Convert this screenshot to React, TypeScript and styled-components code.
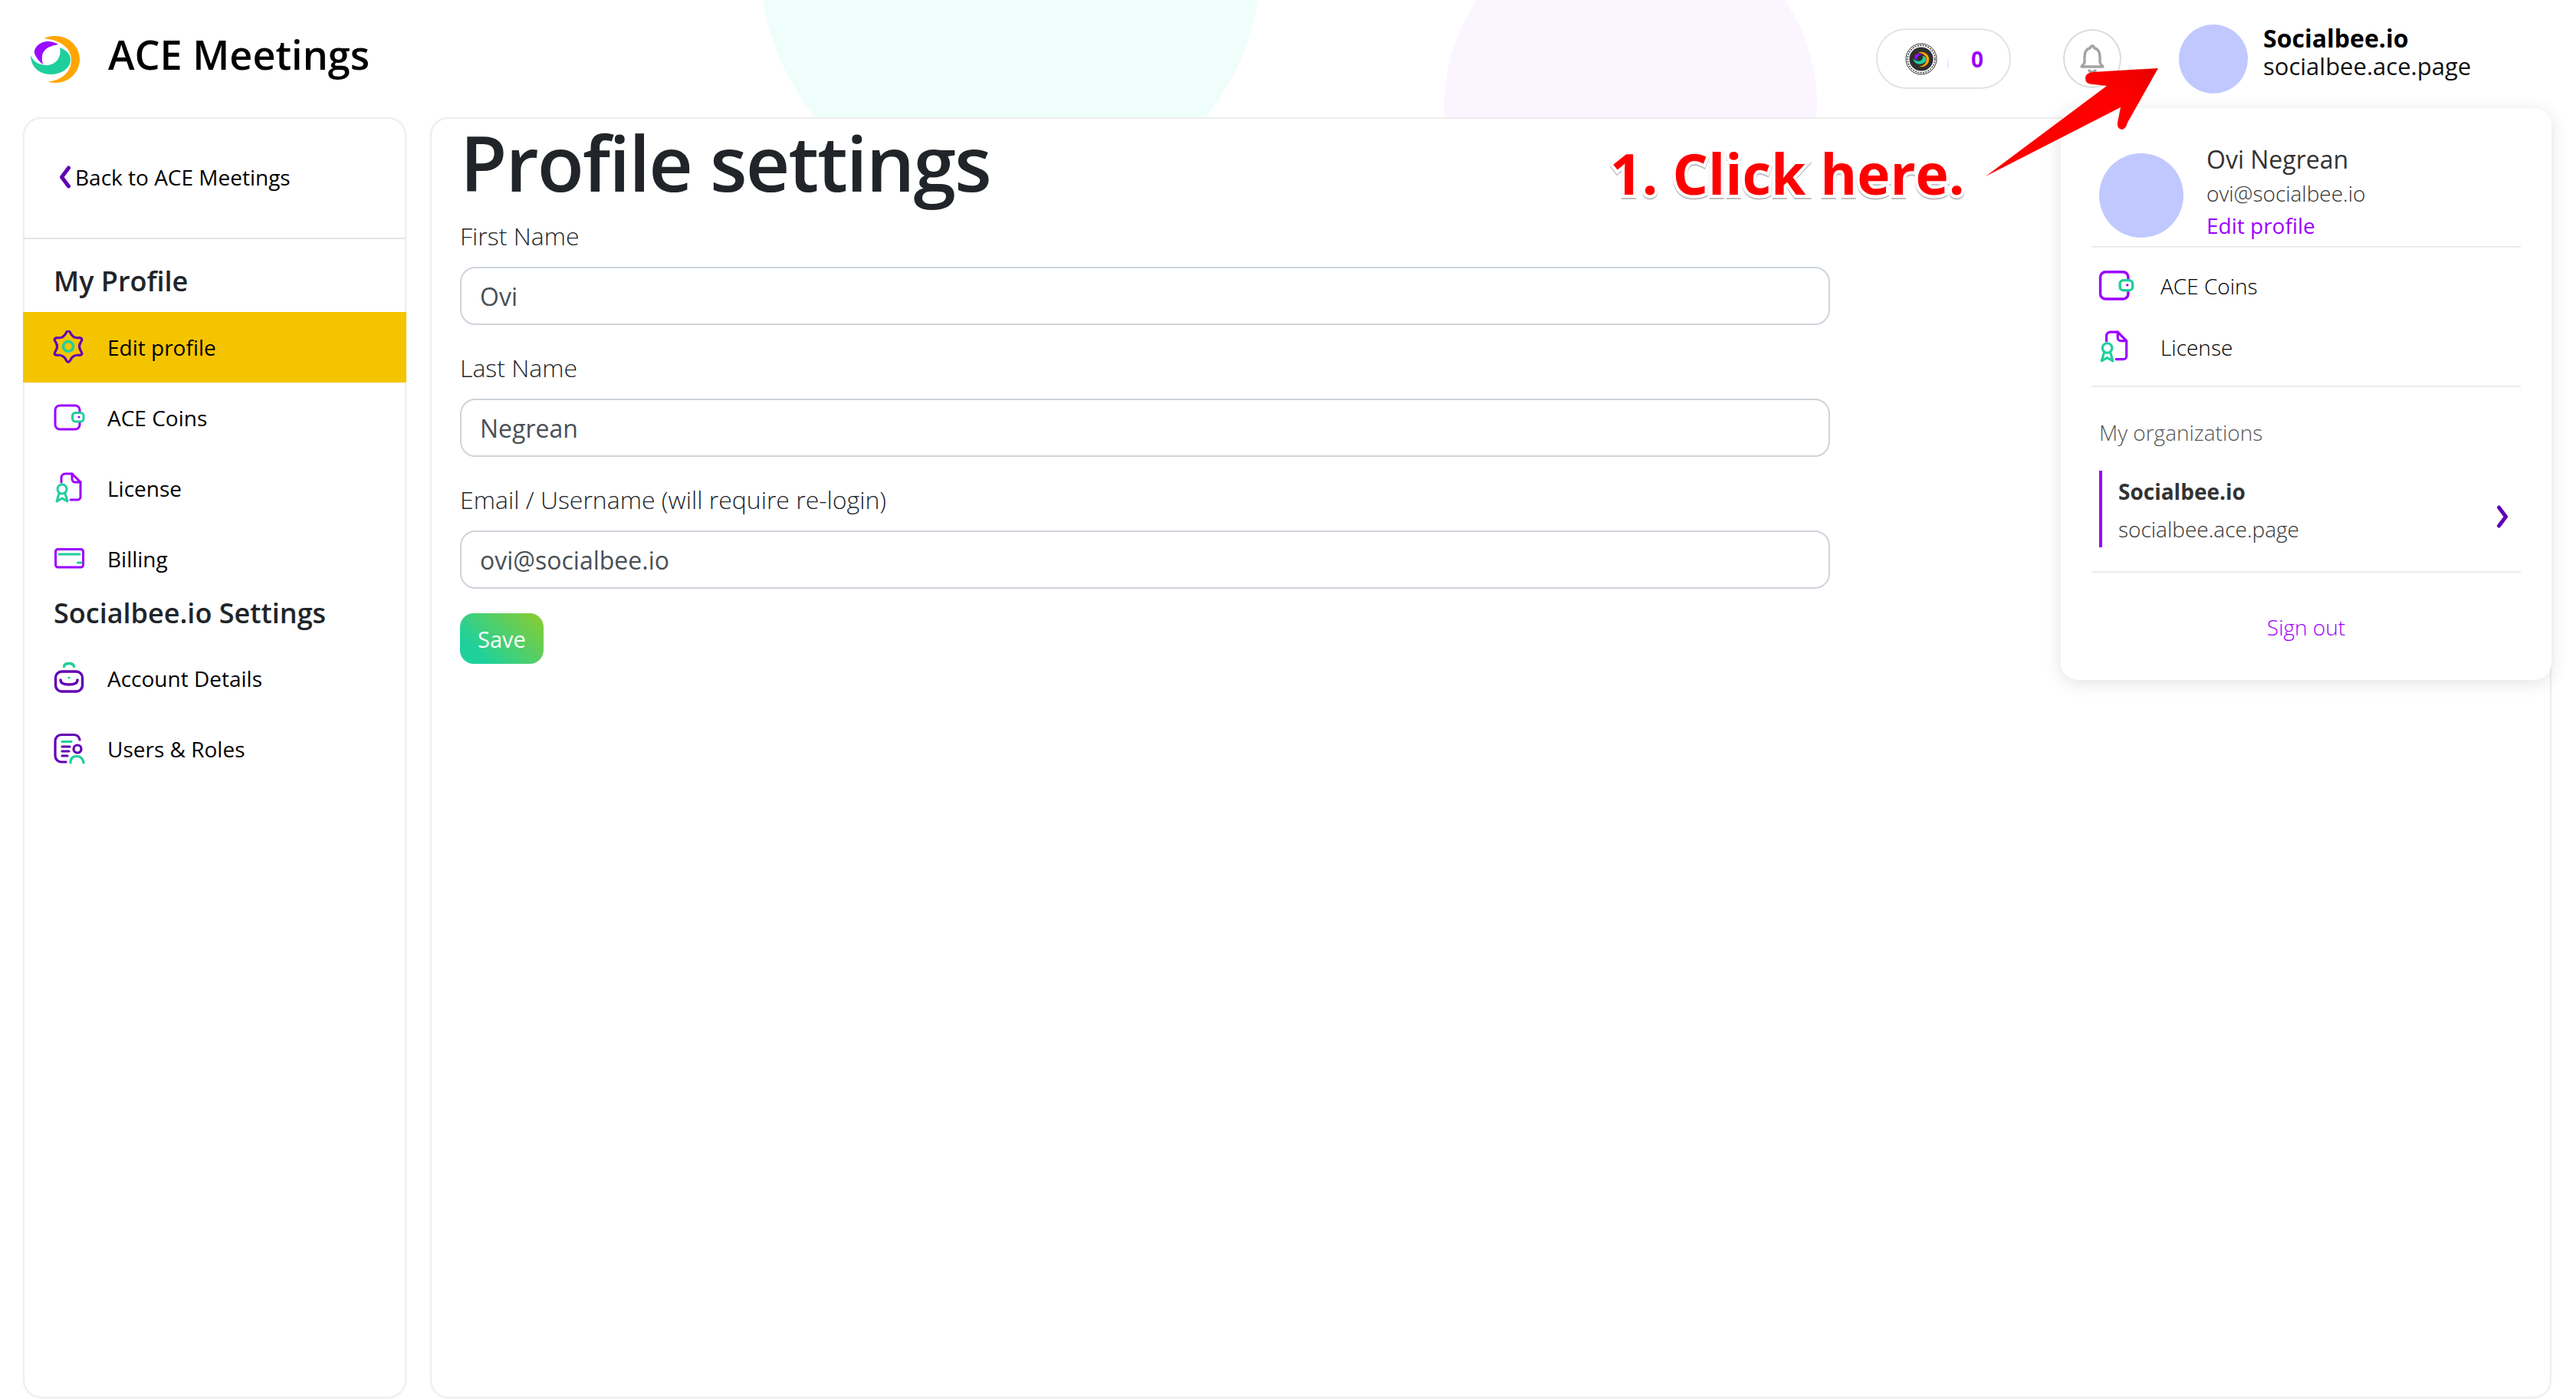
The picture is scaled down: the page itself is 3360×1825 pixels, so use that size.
import styled, { createGlobalStyle } from "styled-components";

const PURPLE = "#9b00ff";
const DEEP = "#6200b3";
const TEAL = "#1ecf9e";

const GlobalStyle = createGlobalStyle`
  html, body {
    margin: 0;
    padding: 0;
    background: #fff;
    font-family: "Open Sans", "Noto Sans", sans-serif;
  }
  * {
    box-sizing: border-box;
  }
`;

// six lobes, smooth wave between a big and a small radius
function gearPath(cx: number, cy: number, big: number, small: number) {
  const pts = Array.from({ length: 12 }, (_, i) => {
    const a = ((i * 30 - 90) * Math.PI) / 180;
    const r = i % 2 === 0 ? big : small;
    return [cx + r * Math.cos(a), cy + r * Math.sin(a)];
  });
  const mid = (a: number[], b: number[]) => [(a[0] + b[0]) / 2, (a[1] + b[1]) / 2];
  const start = mid(pts[11], pts[0]);
  let d = `M${start[0].toFixed(2)} ${start[1].toFixed(2)}`;
  pts.forEach((p, i) => {
    const m = mid(p, pts[(i + 1) % 12]);
    d += `Q${p[0].toFixed(2)} ${p[1].toFixed(2)} ${m[0].toFixed(2)} ${m[1].toFixed(2)}`;
  });
  return d + "Z";
}

function LogoShapes() {
  return (
    <>
      <path
        d="M27 16C32 13.5 38 13 43 13C60 13 74 27 74 43.5C74 60 60 74 43 74C39 74 36 73.5 33 72.5C50 71 63 60 63 44C63 29 49 18 27 16Z"
        fill="#ffa500"
      />
      <path
        d="M48 28C56 31 62 36 62 44C62 55 50 63 36 63C22 63 10 54 10 38C13 46 20 51 31 51C42 51 51 41 48 28Z"
        fill={TEAL}
      />
      <path
        d="M46 24C38 19 28 19 22 23C16 27 13 33 16 38C18 42 22 47 26 50C24 42 24 36 29 31C33 27 40 25 46 24Z"
        fill="#9b0bff"
      />
    </>
  );
}

function Logo() {
  return (
    <LogoSvg viewBox="0 0 85 85">
      <LogoShapes />
    </LogoSvg>
  );
}

function CoinIcon() {
  return (
    <svg width="42" height="42" viewBox="0 0 42 42">
      <circle cx="21" cy="21" r="20" fill="#fff" stroke="#333" strokeWidth="1" />
      <circle cx="21" cy="21" r="17.8" fill="none" stroke="#333" strokeWidth="1.4" strokeDasharray="2 1.4" />
      <circle cx="21" cy="21" r="15.6" fill="#2f2f2f" />
      <g transform="translate(7.5 7.5) scale(0.32)">
        <LogoShapes />
      </g>
    </svg>
  );
}

function BellIcon() {
  return (
    <svg width="36" height="40" viewBox="0 0 36 40" fill="none" stroke="#a3a3a3" strokeWidth="3.4" strokeLinecap="round" strokeLinejoin="round">
      <path d="M18 3a2.5 2.5 0 0 1 2.5 2.5C26 7 28 11.500 28 17v7c0 2 2 3.500 4 6H4c2-2.500 4-4 4-6v-7c0-5.500 2-10 7.500-11.500A2.500 2.500 0 0 1 18 3z" />
      <path d="M14 35c1 2.500 7 2.500 8 0" />
    </svg>
  );
}

function GearIcon({ size = 44 }: { size?: number }) {
  return (
    <svg width={size} height={size} viewBox="0 0 44 44" fill="none" strokeWidth="3.2">
      <path d={gearPath(21, 21, 23.5, 12.5)} stroke={DEEP} strokeLinejoin="round" />
      <circle cx="21" cy="21" r="6.500" stroke={TEAL} strokeWidth="3.6" />
    </svg>
  );
}

function WalletIcon({ size = 44 }: { size?: number }) {
  return (
    <svg width={size} height={size} viewBox="0 0 44 44" fill="none" strokeWidth="3" strokeLinecap="round">
      <path d="M36 14V12a6 6 0 0 0-6-6H10a6 6 0 0 0-6 6V31a6 6 0 0 0 6 6H30a6 6 0 0 0 6-6V28" stroke={PURPLE} />
      <rect x="26.500" y="15.500" width="14.500" height="11.500" rx="4" stroke={TEAL} />
      <circle cx="35" cy="21" r="1.500" fill={PURPLE} />
    </svg>
  );
}

function LicenseIcon({ size = 44 }: { size?: number }) {
  return (
    <svg width={size} height={size} viewBox="0 0 44 44" fill="none" strokeWidth="3" strokeLinecap="round" strokeLinejoin="round">
      <path d="M12 14V8a5 5 0 0 1 5-5H26L37 14V33a4 4 0 0 1-4 4H24" stroke={PURPLE} />
      <path d="M26 3V10a4 4 0 0 0 4 4H37" stroke={PURPLE} />
      <circle cx="13" cy="23" r="6" stroke={TEAL} />
      <path d="M9 29L6 39L13 35L20 39L17 29" stroke={TEAL} />
    </svg>
  );
}

function CardIcon({ size = 44 }: { size?: number }) {
  return (
    <svg width={size} height={size} viewBox="0 0 44 44" fill="none" strokeWidth="3" strokeLinecap="round">
      <rect x="4.500" y="9.500" width="36" height="23.500" rx="3" stroke={PURPLE} />
      <path d="M9 16H36M33.500 27H38" stroke={TEAL} />
    </svg>
  );
}

function BagIcon({ size = 44 }: { size?: number }) {
  return (
    <svg width={size} height={size} viewBox="0 0 44 44" fill="none" strokeWidth="3.400" strokeLinecap="round">
      <path d="M15.500 6.500C16 3 19 2.500 22 2.500C25 2.500 28 3 28.500 6.500" stroke={TEAL} />
      <rect x="4.500" y="13" width="35" height="26" rx="8" stroke={DEEP} />
      <path d="M11 24C11 28 15 30 22 30S33 28 33 24" stroke={DEEP} />
      <circle cx="22" cy="21" r="1.600" fill={TEAL} />
    </svg>
  );
}

function UsersIcon({ size = 44 }: { size?: number }) {
  return (
    <svg width={size} height={size} viewBox="0 0 44 44" fill="none" strokeWidth="3.200" strokeLinecap="round">
      <path d="M36 10C35 5 32 3.500 28 3.500H12a8 8 0 0 0-8 8V31a8 8 0 0 0 8 8H18" stroke={DEEP} />
      <path d="M13 12.500H25" stroke={TEAL} />
      <path d="M13 19H23M13 25H22M13 31H20" stroke={DEEP} />
      <circle cx="33" cy="22" r="5" stroke={DEEP} />
      <path d="M24 40C24 34 27 31.500 32 31.500S40 34 41 40" stroke={TEAL} />
    </svg>
  );
}

const sideMenu = [
  { label: "Edit profile", icon: GearIcon, active: true },
  { label: "ACE Coins", icon: WalletIcon },
  { label: "License", icon: LicenseIcon },
  { label: "Billing", icon: CardIcon },
];

const orgMenu = [
  { label: "Account Details", icon: BagIcon },
  { label: "Users & Roles", icon: UsersIcon },
];

const fields = [
  { label: "First Name", value: "Ovi" },
  { label: "Last Name", value: "Negrean" },
  { label: "Email / Username (will require re-login)", value: "ovi@socialbee.io" },
];

export default function App() {
  return (
    <Page>
      <GlobalStyle />
      <Header>
        <MintBlob />
        <LilacBlob />
        <Brand>
          <Logo />
          <BrandName>ACE Meetings</BrandName>
        </Brand>
        <HeaderRight>
          <CoinPill>
            <CoinIcon />
            <CoinGhost />
            <CoinCount>0</CoinCount>
          </CoinPill>
          <BellButton>
            <BellIcon />
          </BellButton>
          <UserBlock>
            <Avatar $size={90} />
            <UserText>
              <UserName>Socialbee.io</UserName>
              <UserDomain>socialbee.ace.page</UserDomain>
            </UserText>
          </UserBlock>
        </HeaderRight>
      </Header>

      <Body>
        <Sidebar>
          <BackBlock>
            <svg width="16" height="30" viewBox="0 0 16 30" fill="none" stroke={DEEP} strokeWidth="5" strokeLinecap="round" strokeLinejoin="round">
              <path d="M12.500 3L3.500 15L12.500 27" />
            </svg>
            Back to ACE Meetings
          </BackBlock>
          <SideHeading $top={35} $bottom={20}>My Profile</SideHeading>
          {sideMenu.map((item) => (
            <SideRow key={item.label} $active={item.active}>
              <item.icon />
              {item.label}
            </SideRow>
          ))}
          <SideHeading $top={0} $bottom={14}>Socialbee.io Settings</SideHeading>
          {orgMenu.map((item) => (
            <SideRow key={item.label}>
              <item.icon />
              {item.label}
            </SideRow>
          ))}
        </Sidebar>

        <Main>
          <Title>Profile settings</Title>
          {fields.map((field) => (
            <Field key={field.label}>
              <FieldLabel>{field.label}</FieldLabel>
              <TextInput readOnly value={field.value} />
            </Field>
          ))}
          <SaveButton>Save</SaveButton>
        </Main>
      </Body>

      <Popup>
        <PopupHead>
          <PopupAvatar>
            <Avatar $size={110} />
          </PopupAvatar>
          <div>
            <PopupName>Ovi Negrean</PopupName>
            <PopupEmail>ovi@socialbee.io</PopupEmail>
            <PopupEdit>Edit profile</PopupEdit>
          </div>
        </PopupHead>
        <PopupMenu>
          <PopupRow>
            <PopupIconSlot>
              <WalletIcon size={50} />
            </PopupIconSlot>
            ACE Coins
          </PopupRow>
          <PopupRow>
            <PopupIconSlot>
              <LicenseIcon size={46} />
            </PopupIconSlot>
            License
          </PopupRow>
        </PopupMenu>
        <OrgSection>
          <OrgTitle>My organizations</OrgTitle>
          <OrgRow>
            <div>
              <OrgName>Socialbee.io</OrgName>
              <OrgDomain>socialbee.ace.page</OrgDomain>
            </div>
            <OrgChevron viewBox="0 0 16 30" fill="none" stroke={DEEP} strokeWidth="5" strokeLinecap="round" strokeLinejoin="round">
              <path d="M3.500 3L12.500 15L3.500 27" />
            </OrgChevron>
          </OrgRow>
        </OrgSection>
        <SignOut>Sign out</SignOut>
      </Popup>

      <CalloutText>1. Click here.</CalloutText>
      <CalloutArrow viewBox="0 0 250 160">
        <defs>
          <linearGradient id="arrowRed" x1="0" y1="1" x2="1" y2="0">
            <stop offset="0" stopColor="#ff0000" />
            <stop offset="0.75" stopColor="#ff0000" />
            <stop offset="1" stopColor="#e60000" />
          </linearGradient>
        </defs>
        <path
          d="M235 9L150 14Q140 15 140 22Q140 30 150 30L168 32L10 150L186 60L182 80Q181 88 188 89Q193 88 195 80Z"
          fill="url(#arrowRed)"
        />
      </CalloutArrow>
    </Page>
  );
}

const Page = styled.div`
  position: relative;
  display: flex;
  flex-direction: column;
  width: 100%;
  height: 100vh;
  overflow: hidden;
  background: #fff;
`;

const Header = styled.header`
  position: relative;
  flex: 0 0 153px;
  display: flex;
  align-items: center;
  justify-content: space-between;
  padding: 0 118px 0 30px;
  overflow: hidden;
`;

const MintBlob = styled.div`
  position: absolute;
  left: 991px;
  top: -379px;
  width: 654px;
  height: 654px;
  border-radius: 50%;
  background: #effefa;
`;

const LilacBlob = styled.div`
  position: absolute;
  left: 1884px;
  top: -106px;
  width: 486px;
  height: 486px;
  border-radius: 50%;
  background: #faf5ff;
`;

const Brand = styled.div`
  position: relative;
  display: flex;
  align-items: center;
  gap: 26px;
`;

const LogoSvg = styled.svg`
  width: 85px;
  height: 85px;
  display: block;
`;

const BrandName = styled.div`
  margin-bottom: 10px;
  font-size: 52.2px;
  font-weight: 600;
  color: #000;
  line-height: 1;
`;

const HeaderRight = styled.div`
  position: relative;
  display: flex;
  align-items: center;
`;

const CoinPill = styled.div`
  width: 176px;
  height: 79px;
  display: flex;
  align-items: center;
  padding-left: 36px;
  border: 2px solid #e4e4e4;
  border-radius: 40px;
  background: #fff;
  margin-right: 68px;
`;

const CoinGhost = styled.span`
  width: 5px;
  height: 16px;
  margin: 12px 0 0 13px;
  border-left: 2px solid #efe3ff;
  border-radius: 50%;
`;

const CoinCount = styled.span`
  margin-left: 26px;
  font-size: 28px;
  font-weight: 700;
  color: ${PURPLE};
`;

const BellButton = styled.div`
  width: 76px;
  height: 77px;
  display: flex;
  align-items: center;
  justify-content: center;
  border: 2px solid #dcdcdc;
  border-radius: 50%;
  background: #fff;
  margin-right: 75px;
`;

const UserBlock = styled.div`
  width: 400px;
  display: flex;
  align-items: center;
  gap: 20px;
`;

const UserText = styled.div`
  margin-bottom: 18px;
`;

const Avatar = styled.div<{ $size: number }>`
  width: ${(p) => p.$size}px;
  height: ${(p) => p.$size}px;
  flex: none;
  border-radius: 50%;
  background: #c0c8ff;
`;

const UserName = styled.div`
  font-size: 32px;
  font-weight: 700;
  line-height: 36px;
  color: #000;
`;

const UserDomain = styled.div`
  font-size: 31px;
  font-weight: 400;
  line-height: 36px;
  color: #111;
`;

const Body = styled.div`
  flex: 1;
  min-height: 0;
  display: flex;
  gap: 31px;
  padding: 0 32px 1px 30px;
`;

const Panel = styled.div`
  border: 2px solid #eeeeee;
  border-radius: 24px;
  background: #fff;
  box-shadow: 0 0 4px rgba(0, 0, 0, 0.04);
`;

const Sidebar = styled(Panel)`
  flex: 0 0 500px;
`;

const BackBlock = styled.div`
  height: 157px;
  display: flex;
  align-items: center;
  gap: 5px;
  margin: 0 -2px;
  padding: 0 0 4px 47px;
  border-bottom: 2px solid #e5e5e5;
  font-size: 28px;
  color: #000;
`;

const SideHeading = styled.div<{ $top: number; $bottom: number }>`
  padding: ${(p) => p.$top}px 0 ${(p) => p.$bottom}px 38px;
  font-size: 36px;
  line-height: ${(p) => (p.$top ? 40 : 50)}px;
  font-weight: 600;
  color: #212529;
`;

const SideRow = styled.div<{ $active?: boolean }>`
  height: 92px;
  margin: 0 -2px;
  display: flex;
  align-items: center;
  gap: 28px;
  padding-left: 38px;
  font-size: 28px;
  color: #000;
  background: ${(p) => (p.$active ? "#f5c400" : "transparent")};
`;

const Main = styled(Panel)`
  flex: 1;
  padding: 0 0 0 37px;
`;

const Title = styled.h1`
  margin: 0;
  height: 130px;
  font-size: 100px;
  line-height: 112px;
  font-weight: 600;
  letter-spacing: -1.9px;
  color: #212529;
`;

const Field = styled.div`
  margin-bottom: 33px;
`;

const FieldLabel = styled.label`
  display: block;
  margin-bottom: 17px;
  font-size: 32px;
  line-height: 46px;
  font-weight: 300;
  color: #212529;
`;

const TextInput = styled.input`
  display: block;
  width: 1787px;
  height: 76px;
  padding: 0 24px;
  border: 2px solid #ced4da;
  border-radius: 20px;
  outline: none;
  background: #fff;
  font-family: inherit;
  font-size: 32px;
  color: #495057;
`;

const SaveButton = styled.button`
  display: block;
  width: 109px;
  height: 66px;
  margin-top: -1px;
  padding: 0;
  border: 0;
  border-radius: 18px;
  background: linear-gradient(45deg, #1ed19c 20%, #8ccc2e 100%);
  font-family: inherit;
  font-size: 29px;
  color: #fff;
`;

const Popup = styled.div`
  position: absolute;
  top: 141px;
  right: 32px;
  width: 640px;
  height: 746px;
  padding: 0 40px;
  border-radius: 22px;
  background: #fff;
  box-shadow: 0 4px 22px rgba(30, 40, 60, 0.13);
`;

const PopupHead = styled.div`
  display: flex;
  gap: 30px;
  padding: 48px 0 6px 10px;
  border-bottom: 2px solid #e9ecef;
`;

const PopupAvatar = styled.div`
  margin-top: 11px;
`;

const PopupName = styled.div`
  margin: -2px 0 2px;
  font-size: 32px;
  line-height: 42px;
  color: #333;
`;

const PopupEmail = styled.div`
  font-size: 28px;
  line-height: 42px;
  font-weight: 300;
  color: #333;
`;

const PopupEdit = styled.div`
  font-size: 28px;
  line-height: 42px;
  color: ${PURPLE};
`;

const PopupMenu = styled.div`
  padding: 10px 0;
  border-bottom: 2px solid #e9ecef;
`;

const PopupRow = styled.div`
  height: 80px;
  display: flex;
  align-items: center;
  gap: 33px;
  padding-left: 7px;
  font-size: 28px;
  font-weight: 300;
  color: #000;
`;

const PopupIconSlot = styled.div`
  width: 50px;
  height: 50px;
  display: flex;
  align-items: center;
`;

const OrgSection = styled.div`
  padding: 39px 0 31px 10px;
  border-bottom: 2px solid #e9ecef;
`;

const OrgTitle = styled.div`
  font-size: 28px;
  line-height: 40px;
  font-weight: 300;
  color: #555;
`;

const OrgRow = styled.div`
  height: 100px;
  margin-top: 30px;
  display: flex;
  align-items: center;
  justify-content: space-between;
  padding: 0 16px 0 21px;
  border-left: 4px solid ${PURPLE};
`;

const OrgName = styled.div`
  margin-top: 3px;
  font-size: 28px;
  line-height: 44px;
  font-weight: 700;
  color: #333;
`;

const OrgDomain = styled.div`
  margin-top: 5px;
  margin-bottom: 1px;
  font-size: 28px;
  line-height: 44px;
  font-weight: 300;
  color: #333;
`;

const OrgChevron = styled.svg`
  width: 16px;
  height: 30px;
  margin-top: 20px;
`;

const SignOut = styled.div`
  padding-top: 51px;
  text-align: center;
  font-size: 28px;
  line-height: 40px;
  font-weight: 350;
  color: ${PURPLE};
`;

const CalloutText = styled.div`
  position: absolute;
  left: 2100px;
  top: 176px;
  font-size: 73px;
  line-height: 100px;
  font-weight: 700;
  white-space: nowrap;
  color: #ff0000;
  -webkit-text-stroke: 8px #fff;
  paint-order: stroke fill;
  filter: drop-shadow(0 2px 0 #bdbdbd);
`;

const CalloutArrow = styled.svg`
  position: absolute;
  left: 2580px;
  top: 80px;
  width: 250px;
  height: 160px;
`;
